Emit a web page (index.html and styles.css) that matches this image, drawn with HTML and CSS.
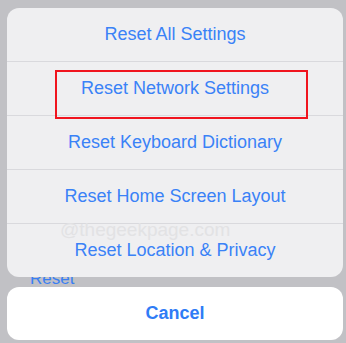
FILE: index.html
```html
<!DOCTYPE html>
<html lang="en">
<head>
<meta charset="UTF-8">
<meta name="viewport" content="width=device-width, initial-scale=1.0">
<title>Reset</title>
<link rel="stylesheet" href="styles.css">
</head>
<body>
<div class="screen">
  <div class="behind">Reset</div>
  <div class="sheet">
    <div class="row">Reset All Settings</div>
    <div class="row">Reset Network Settings</div>
    <div class="row">Reset Keyboard Dictionary</div>
    <div class="row">Reset Home Screen Layout</div>
    <div class="row last">Reset Location &amp; Privacy</div>
    <div class="highlight"></div>
    <div class="watermark">@thegeekpage.com</div>
  </div>
  <div class="cancel">Cancel</div>
</div>
</body>
</html>
```

FILE: styles.css
```css
body {
  margin: 0;
  background-color: #c1c1c5;
  font-family: "Liberation Sans", Arial, sans-serif;
}
.screen {
  position: relative;
  width: 346px;
  height: 343px;
  padding: 8px 3px 0 7px;
  box-sizing: border-box;
  display: flex;
  flex-direction: column;
  gap: 10px;
}
.behind {
  position: absolute;
  left: 30px;
  top: 269px;
  font-size: 17px;
  color: #3a7ff2;
}
.sheet {
  position: relative;
  background-color: #efeff1;
  border-radius: 12px;
  overflow: hidden;
  display: flex;
  flex-direction: column;
}
.row {
  height: 54px;
  box-sizing: border-box;
  display: flex;
  justify-content: center;
  align-items: center;
  font-size: 18px;
  color: #3a82f7;
  border-bottom: 1px solid #d9d9dd;
}
.row.last {
  height: 53px;
  border-bottom: none;
}
.highlight {
  position: absolute;
  left: 48px;
  top: 62px;
  width: 249px;
  height: 45px;
  border: 2px solid #f0141e;
}
.watermark {
  position: absolute;
  left: 53px;
  top: 211px;
  font-size: 19px;
  color: #e2e2e4;
}
.cancel {
  height: 53px;
  background-color: #ffffff;
  border-radius: 12px;
  display: flex;
  justify-content: center;
  align-items: center;
  font-size: 18px;
  font-weight: bold;
  color: #2f7cf6;
}
```
